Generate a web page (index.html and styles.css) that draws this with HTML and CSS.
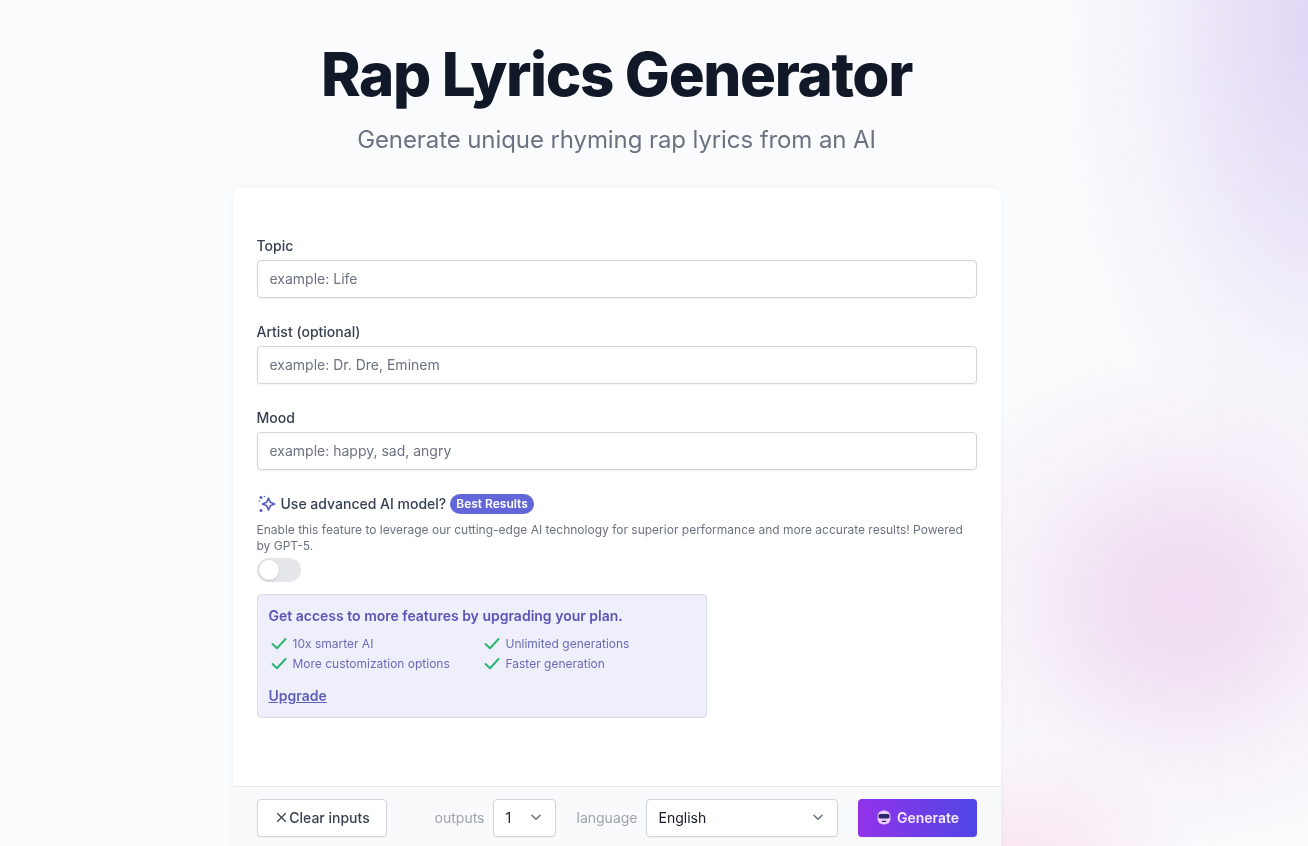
FILE: index.html
```html
<!DOCTYPE html>
<html lang="en">
<head>
<meta charset="utf-8">
<title>Rap Lyrics Generator</title>
<link rel="stylesheet" href="styles.css">
</head>
<body>
<div class="backdrop"></div>
<main class="page">
  <header class="hero">
    <h1>Rap Lyrics Generator</h1>
    <p>Generate unique rhyming rap lyrics from an AI</p>
  </header>
  <section class="card">
    <div class="fields">
      <div class="field">
        <label class="label">Topic</label>
        <input class="input" placeholder="example: Life">
      </div>
      <div class="field">
        <label class="label">Artist (optional)</label>
        <input class="input" placeholder="example: Dr. Dre, Eminem">
      </div>
      <div class="field">
        <label class="label">Mood</label>
        <input class="input" placeholder="example: happy, sad, angry">
      </div>
      <div class="advanced">
        <div class="advanced-title">
          <svg class="sparkle" viewBox="0 0 20 20" fill="none" stroke="#5b5fc7" stroke-width="1.700" stroke-linejoin="round">
            <path d="M11.500 4.200 13.300 8.200 17.600 10 13.300 11.800 11.500 15.800 9.700 11.800 5.400 10 9.700 8.200Z"/>
            <g fill="#5b5fc7" stroke="none">
              <circle cx="4" cy="3.500" r="1.500"/>
              <circle cx="7.500" cy="2.500" r=".8"/>
              <circle cx="4" cy="16.500" r="1.600"/>
              <circle cx="2.500" cy="7" r=".8"/>
            </g>
          </svg>
          <span>Use advanced AI model?</span>
          <span class="badge">Best Results</span>
        </div>
        <p class="hint">Enable this feature to leverage our cutting-edge AI technology for superior performance and more accurate results! Powered by GPT-5.</p>
        <div class="toggle"><span class="knob"></span></div>
      </div>
      <div class="upsell">
        <h2>Get access to more features by upgrading your plan.</h2>
        <ul class="perks">
          <li><svg class="check" viewBox="0 0 16 16"><path d="M1.500 8l4.500 4.200L14.500 3"/></svg>10x smarter AI</li>
          <li><svg class="check" viewBox="0 0 16 16"><path d="M1.500 8l4.500 4.200L14.500 3"/></svg>Unlimited generations</li>
          <li><svg class="check" viewBox="0 0 16 16"><path d="M1.500 8l4.500 4.200L14.500 3"/></svg>More customization options</li>
          <li><svg class="check" viewBox="0 0 16 16"><path d="M1.500 8l4.500 4.200L14.500 3"/></svg>Faster generation</li>
        </ul>
        <a class="upgrade" href="#">Upgrade</a>
      </div>
    </div>
    <footer class="actions">
      <button class="btn-clear" type="button">
        <svg class="x" viewBox="0 0 24 24"><path d="M6 6l12 12M18 6 6 18"/></svg>Clear inputs
      </button>
      <div class="options">
        <span class="opt-label">outputs</span>
        <div class="select select-outputs">1<svg class="chev" viewBox="0 0 20 20"><path d="M5.500 8l4.500 4.500L14.500 8"/></svg></div>
        <span class="opt-label opt-lang">language</span>
        <div class="select select-lang">English<svg class="chev" viewBox="0 0 20 20"><path d="M5.500 8l4.500 4.500L14.500 8"/></svg></div>
      </div>
      <button class="btn-generate" type="button">
        <svg class="bot" viewBox="1.500 1 13 14"><path fill="#e9c9f5" d="M8 1.500c3.600 0 6 2.200 6 5.500v2.500c0 3-2.400 5-6 5s-6-2-6-5V7c0-3.300 2.400-5.500 6-5.500Z"/><rect x="2.800" y="4.800" width="10.400" height="4.200" rx="1.600" fill="#2d2a6e"/><rect x="6" y="11" width="4" height="1.300" rx=".6" fill="#2d2a6e"/></svg>
        Generate
      </button>
    </footer>
  </section>
</main>
</body>
</html>
```
FILE: styles.css
```css
* { box-sizing: border-box; }
html, body { margin: 0; height: 100%; }
body {
  overflow: hidden;
  background: #fafbfd;
  font-family: Inter, "Liberation Sans", sans-serif;
  color: #374151;
}
.backdrop {
  position: fixed;
  inset: 0;
  pointer-events: none;
  background:
    radial-gradient(ellipse 270px 250px at 1185px 600px, rgba(238,216,240,.9) 0, rgba(238,216,240,.72) 30%, rgba(238,216,240,.28) 65%, rgba(238,216,240,0) 100%),
    radial-gradient(ellipse 190px 130px at 1010px 870px, rgba(247,224,238,.85) 0, rgba(247,224,238,.5) 50%, rgba(247,224,238,0) 100%),
    radial-gradient(ellipse 260px 480px at 1325px 30px, rgba(222,212,245,1) 0, rgba(226,216,245,.7) 35%, rgba(232,222,245,.3) 70%, rgba(232,222,245,0) 100%),
    linear-gradient(90deg, rgba(110,120,150,.022) 1px, transparent 1px) 17px 0 / 200px 200px;
}
.page {
  position: relative;
  width: 1233px;
  display: flex;
  flex-direction: column;
  align-items: center;
}
.hero { text-align: center; padding-top: 36px; }
.hero h1 {
  margin: 0;
  font-size: 60px;
  line-height: 76px;
  font-weight: 800;
  letter-spacing: -1.350px;
  color: #111827;
}
.hero p {
  margin: 12px 0 0;
  font-size: 24px;
  line-height: 32px;
  letter-spacing: -.09px;
  color: #6b7280;
}
.card {
  width: 768px;
  margin-top: 32px;
  background: #fff;
  border-radius: 8px 8px 0 0;
  box-shadow: 0 0 6px rgba(17,24,39,.04);
}
.fields { padding: 48px 24px 68px; display: flex; flex-direction: column; }
.field { margin-bottom: 24px; display: flex; flex-direction: column; gap: 4px; }
.label { font-size: 14px; line-height: 20px; font-weight: 500; color: #374151; }
.input {
  height: 38px;
  padding: 0 12px 2px;
  border: 1px solid #d1d5db;
  border-radius: 4px;
  background: #fff;
  font: 14px Inter, sans-serif;
  color: #111827;
  box-shadow: 0 1px 2px rgba(0,0,0,.05);
  outline: none;
}
.input::placeholder { color: #6b7280; opacity: 1; }
.advanced-title {
  display: flex;
  align-items: center;
  gap: 4px;
  font-size: 14px;
  line-height: 20px;
  font-weight: 500;
  height: 20px;
}
.sparkle { width: 20px; height: 20px; }
.badge {
  background: #6366d9;
  color: #fff;
  font-size: 12px;
  font-weight: 600;
  line-height: 20px;
  padding: 0 6px;
  border-radius: 10px;
}
.hint {
  margin: 8px 0 0;
  font-size: 12px;
  line-height: 16px;
  color: #6b7280;
}
.toggle {
  width: 44px;
  height: 24px;
  margin-top: 4px;
  padding: 2px;
  border-radius: 12px;
  background: #e5e7eb;
}
.knob {
  display: block;
  width: 20px;
  height: 20px;
  border-radius: 50%;
  background: #fff;
  box-shadow: 0 1px 3px rgba(0,0,0,.15);
}
.upsell {
  width: 450px;
  height: 124px;
  margin-top: 12px;
  padding: 11px 11px;
  background: #efeffc;
  border: 1px solid #dcdcf0;
  border-radius: 4px;
  color: #6a6ab8;
}
.upsell h2 {
  margin: 0;
  font-size: 14px;
  line-height: 20px;
  font-weight: 600;
  color: #5a55b5;
}
.perks {
  list-style: none;
  margin: 8px 0 0;
  padding: 0 0 0 2px;
  display: grid;
  grid-template-columns: 213px auto;
  font-size: 12px;
  line-height: 20px;
  justify-content: start;
}
.perks li { display: flex; align-items: center; gap: 6px; }
.check {
  width: 16px;
  height: 16px;
  fill: none;
  stroke: #2bb673;
  stroke-width: 2;
  stroke-linecap: round;
  stroke-linejoin: round;
}
.upgrade {
  display: inline-block;
  margin-top: 12px;
  font-size: 14px;
  line-height: 20px;
  font-weight: 600;
  color: #5f5fb8;
}
.actions {
  display: flex;
  align-items: flex-start;
  padding: 12px 24px;
  background: #f9fafb;
  border-top: 1px solid #e5e7eb;
  height: 76px;
}
.btn-clear {
  display: flex;
  align-items: center;
  justify-content: center;
  width: 130px;
  height: 38px;
  padding: 0 6px 1px;
  background: #fff;
  border: 1px solid #d1d5db;
  border-radius: 4px;
  font: 500 14px Inter, sans-serif;
  color: #374151;
  box-shadow: 0 1px 2px rgba(0,0,0,.05);
}
.x { width: 17px; height: 17px; fill: none; stroke: #374151; stroke-width: 1.800; margin-right: -1px; }
.options { display: flex; align-items: center; gap: 8px; height: 37px; margin-left: auto; }
.opt-label { font-size: 14px; color: #9ca3af; }
.opt-lang { margin-left: 13px; margin-right: 0; }
.select {
  display: flex;
  align-items: center;
  justify-content: space-between;
  height: 38px;
  padding: 0 10px 1px 12px;
  background: #fff;
  border: 1px solid #d1d5db;
  border-radius: 4px;
  font-size: 14px;
  color: #111827;
  box-shadow: 0 1px 2px rgba(0,0,0,.05);
}
.select-outputs { width: 63px; }
.select-lang { width: 192px; }
.chev { width: 18px; height: 18px; fill: none; stroke: #6b7280; stroke-width: 1.700; stroke-linecap: round; stroke-linejoin: round; }
.btn-generate {
  display: flex;
  align-items: center;
  justify-content: center;
  gap: 6px;
  width: 119px;
  height: 38px;
  padding: 0 0 1px 2px;
  margin-left: 20px;
  border: 0;
  border-radius: 4px;
  background: linear-gradient(90deg, #9333ea, #4f46e5);
  font: 600 14px Inter, sans-serif;
  color: #f1e9fd;
  box-shadow: 0 1px 2px rgba(0,0,0,.05);
}
.bot { width: 14px; height: 15px; }
```
